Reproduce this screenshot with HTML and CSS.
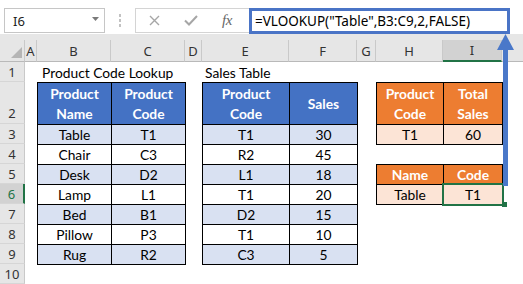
FILE: index.html
```html
<!DOCTYPE html>
<html>
<head>
<meta charset="utf-8">
<link rel="stylesheet" href="styles.css">
</head>
<body>
<div class="app">
  <div class="topbar">
    <div class="namebox"><span>I6</span><svg class="dd" width="7" height="4" viewBox="0 0 7 4"><polygon points="0,0 7,0 3.5,4" fill="#7a7a7a"/></svg></div>
    <div class="grip"><i></i><i></i><i></i></div>
    <div class="fxbox">
      <svg class="ic-x" width="11" height="11" viewBox="0 0 11 11"><path d="M1 1L10 10M10 1L1 10" stroke="#a6a6a6" stroke-width="1.4" fill="none"/></svg>
      <svg class="ic-ok" width="14" height="11" viewBox="0 0 14 11"><path d="M1 5.5L5 9.5L13 1" stroke="#a6a6a6" stroke-width="2" fill="none"/></svg>
      <span class="fx">fx</span>
    </div>
    <div class="formula">=VLOOKUP("Table",B3:C9,2,FALSE)</div>
  </div>
  <div class="gap"></div>
  <div class="sheet">
    <div class="ch corner"><svg width="25" height="22" viewBox="0 0 25 22"><polygon points="22,7 22,18 11,18" fill="#b5b5b5"/></svg></div>
    <div class="ch">A</div>
    <div class="ch">B</div>
    <div class="ch">C</div>
    <div class="ch">D</div>
    <div class="ch">E</div>
    <div class="ch">F</div>
    <div class="ch">G</div>
    <div class="ch">H</div>
    <div class="ch sel">I</div>
    <div class="ch last"></div>

    <div class="rh g2">1</div>
    <div class="rh g3 bottom">2</div>
    <div class="rh g4">3</div>
    <div class="rh g5">4</div>
    <div class="rh g6">5</div>
    <div class="rh g7 sel">6</div>
    <div class="rh g8">7</div>
    <div class="rh g9">8</div>
    <div class="rh g10">9</div>
    <div class="rh g11">10</div>

    <div class="title title1">Product Code Lookup</div>
    <div class="title title2">Sales Table</div>

    <div class="tb t1">
      <div class="c hb">Product<br>Name</div><div class="c hb">Product<br>Code</div>
      <div class="c lb">Table</div><div class="c lb">T1</div>
      <div class="c w">Chair</div><div class="c w">C3</div>
      <div class="c lb">Desk</div><div class="c lb">D2</div>
      <div class="c w">Lamp</div><div class="c w">L1</div>
      <div class="c lb">Bed</div><div class="c lb">B1</div>
      <div class="c w">Pillow</div><div class="c w">P3</div>
      <div class="c lb">Rug</div><div class="c lb">R2</div>
    </div>

    <div class="tb t2">
      <div class="c hb">Product<br>Code</div><div class="c hb">Sales</div>
      <div class="c lb">T1</div><div class="c lb">30</div>
      <div class="c w">R2</div><div class="c w">45</div>
      <div class="c lb">L1</div><div class="c lb">18</div>
      <div class="c w">T1</div><div class="c w">20</div>
      <div class="c lb">D2</div><div class="c lb">15</div>
      <div class="c w">T1</div><div class="c w">10</div>
      <div class="c lb">C3</div><div class="c lb">5</div>
    </div>

    <div class="tb t3">
      <div class="c ho">Product<br>Code</div><div class="c ho">Total<br>Sales</div>
      <div class="c lo">T1</div><div class="c lo">60</div>
    </div>

    <div class="tb t4">
      <div class="c ho">Name</div><div class="c ho">Code</div>
      <div class="c lo">Table</div><div class="c lo selcell">T1</div>
    </div>
  </div>
  <svg class="arrow" width="19" height="154" viewBox="0 0 19 154"><rect x="7" y="14" width="5" height="139" fill="#4a78c9"/><polygon points="9.5,1 1,17 18,17" fill="#4a78c9"/></svg>
</div>
</body>
</html>
```
FILE: styles.css
```css
html, body {
  margin: 0;
  padding: 0;
  background: #fff;
}
body {
  width: 523px;
  height: 284px;
  overflow: hidden;
  font-family: Lato, "Liberation Sans", sans-serif;
}
.app {
  position: relative;
  width: 523px;
  height: 284px;
  overflow: hidden;
}
.topbar {
  display: flex;
  align-items: flex-start;
  height: 34px;
  padding-top: 8px;
  box-sizing: border-box;
  background: #fff;
}
.namebox {
  margin-left: 4px;
  width: 101px;
  height: 25px;
  box-sizing: border-box;
  border: 1px solid #c6c6c6;
  display: flex;
  align-items: center;
  justify-content: space-between;
  padding: 0 5px 0 8px;
  font-family: "Noto Sans", sans-serif;
  font-size: 13px;
  color: #222;
}
.dd {
  margin-top: -3px;
}
.grip {
  margin-left: 14px;
  margin-top: 6px;
  display: flex;
  flex-direction: column;
  gap: 2px;
}
.grip i {
  display: block;
  width: 2px;
  height: 3px;
  background: #c2c2c2;
}
.fxbox {
  margin-left: 14px;
  width: 114px;
  height: 25px;
  box-sizing: border-box;
  border: 1px solid #d4d4d4;
  border-right: none;
  display: flex;
  align-items: center;
  padding-left: 13px;
}
.ic-ok {
  margin-left: 24px;
}
.fx {
  margin-left: 24px;
  font-family: "Liberation Serif", serif;
  font-style: italic;
  font-size: 15px;
  color: #666;
  letter-spacing: -0.5px;
}
.formula {
  width: 261px;
  height: 26px;
  box-sizing: border-box;
  border: 3px solid #4a74c6;
  display: flex;
  align-items: center;
  padding-left: 3px;
  font-family: "Noto Sans", sans-serif;
  font-size: 13.5px;
  color: #000;
  white-space: nowrap;
}
.gap {
  height: 6px;
  background: #e6e6e6;
}
.sheet {
  display: grid;
  grid-template-columns: 25px 12px 74px 74px 17px 87px 68px 19px 67px 59px 21px;
  grid-template-rows: 22px 20px 42px repeat(8, 20px);
}
.ch {
  grid-row: 1;
  background: #e6e6e6;
  border-right: 1px solid #c9c9c9;
  border-bottom: 1px solid #b9b9b9;
  box-sizing: border-box;
  display: flex;
  align-items: center;
  justify-content: center;
  font-family: "Noto Sans", sans-serif;
  font-size: 13px;
  color: #333;
}
.ch.corner {
  position: relative;
}
.ch.corner svg {
  position: absolute;
  left: 0;
  top: 0;
}
.ch.last {
  border-right: none;
}
.ch.sel {
  background: #d2d2d2;
  border-bottom: 2px solid #217346;
}
.rh {
  grid-column: 1;
  background: #e6e6e6;
  border-right: 1px solid #c9c9c9;
  border-bottom: 1px solid #d6d6d6;
  box-sizing: border-box;
  display: flex;
  align-items: center;
  justify-content: center;
  font-family: "Noto Sans", sans-serif;
  font-size: 13px;
  color: #333;
}
.rh.bottom {
  align-items: flex-end;
  padding-bottom: 1px;
}
.rh.sel {
  background: #d2d2d2;
  border-right: 2px solid #217346;
  color: #217346;
}
.g2 { grid-row: 2; }
.g3 { grid-row: 3; }
.g4 { grid-row: 4; }
.g5 { grid-row: 5; }
.g6 { grid-row: 6; }
.g7 { grid-row: 7; }
.g8 { grid-row: 8; }
.g9 { grid-row: 9; }
.g10 { grid-row: 10; }
.g11 { grid-row: 11; }
.title {
  grid-row: 2;
  display: flex;
  align-items: center;
  white-space: nowrap;
  font-size: 13.8px;
  color: #000;
}
.title1 {
  grid-column: 3 / 6;
  padding-left: 5px;
}
.title2 {
  grid-column: 6 / 8;
  padding-left: 3px;
}
.tb {
  display: grid;
  background: #000;
  padding: 1px;
  gap: 1px;
  align-self: start;
  justify-self: start;
}
.t1 {
  grid-column: 3 / 5;
  grid-row: 3 / 11;
  grid-template-columns: 73px 73px;
  grid-template-rows: 41px repeat(7, 19px);
}
.t2 {
  grid-column: 6 / 8;
  grid-row: 3 / 11;
  grid-template-columns: 86px 67px;
  grid-template-rows: 41px repeat(7, 19px);
}
.t3 {
  grid-column: 9 / 11;
  grid-row: 3 / 5;
  grid-template-columns: 66px 58px;
  grid-template-rows: 41px 19px;
}
.t4 {
  grid-column: 9 / 11;
  grid-row: 6 / 8;
  grid-template-columns: 66px 58px;
  grid-template-rows: 19px 19px;
}
.c {
  display: flex;
  align-items: center;
  justify-content: center;
  text-align: center;
  line-height: 20px;
  font-size: 13.8px;
  color: #000;
}
.hb {
  background: #4472c4;
  color: #fff;
  font-weight: bold;
}
.lb {
  background: #d9e1f2;
}
.w {
  background: #fff;
}
.ho {
  background: #ed7d31;
  color: #fff;
  font-weight: bold;
}
.lo {
  background: #fce4d6;
}
.selcell {
  position: relative;
}
.selcell::after {
  content: "";
  position: absolute;
  left: -2px;
  top: -2px;
  right: -2px;
  bottom: -2px;
  border: 2px solid #217346;
}
.selcell::before {
  content: "";
  position: absolute;
  right: -5px;
  bottom: -3px;
  width: 5px;
  height: 5px;
  background: #217346;
  z-index: 2;
}
.arrow {
  position: absolute;
  left: 496px;
  top: 33px;
}
```
